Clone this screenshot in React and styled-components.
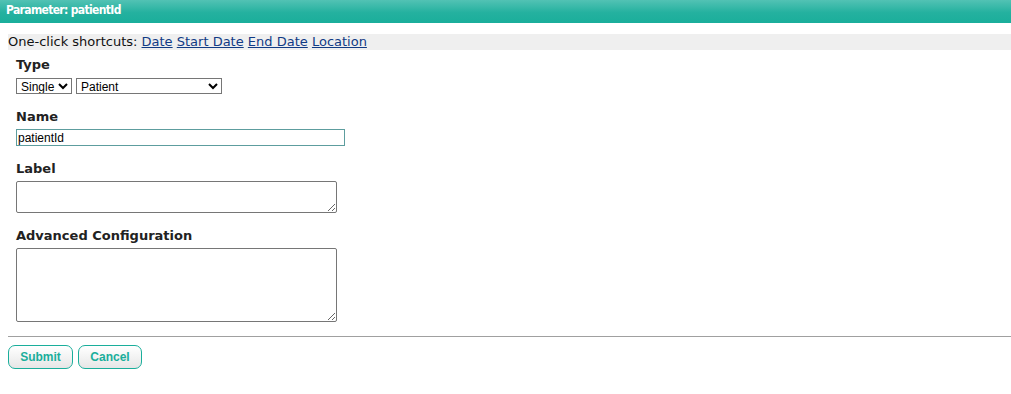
import React from "react";
import styled, { createGlobalStyle } from "styled-components";

const GlobalStyle = createGlobalStyle`
  body {
    margin: 0;
    background: #ffffff;
    font-family: "DejaVu Sans", Verdana, sans-serif;
    color: #222;
  }
`;

export default function App() {
  const shortcuts = ["Date", "Start Date", "End Date", "Location"];

  return (
    <>
      <GlobalStyle />
      <StyledHeader>Parameter: patientId</StyledHeader>
      <StyledPage>
        <StyledShortcutBar>
          One-click shortcuts:{" "}
          {shortcuts.map((s, i) => (
            <React.Fragment key={s}>
              <StyledLink href="#">{s}</StyledLink>
              {i < shortcuts.length - 1 ? " " : ""}
            </React.Fragment>
          ))}
        </StyledShortcutBar>
        <StyledForm>
          <StyledField>
            <StyledLabel>Type</StyledLabel>
            <StyledSelectRow>
              <StyledSelect width={56} defaultValue="Single">
                <option>Single</option>
                <option>Multiple</option>
              </StyledSelect>
              <StyledSelect width={146} defaultValue="Patient">
                <option>Patient</option>
                <option>Location</option>
                <option>Date</option>
              </StyledSelect>
            </StyledSelectRow>
          </StyledField>
          <StyledField>
            <StyledLabel>Name</StyledLabel>
            <StyledInput type="text" defaultValue="patientId" />
          </StyledField>
          <StyledField>
            <StyledLabel>Label</StyledLabel>
            <StyledTextArea rows={2} height={32} />
          </StyledField>
          <StyledField>
            <StyledLabel>Advanced Configuration</StyledLabel>
            <StyledTextArea rows={5} height={74} />
          </StyledField>
        </StyledForm>
        <StyledRule />
        <StyledButtonRow>
          <StyledButton width={65}>Submit</StyledButton>
          <StyledButton width={64}>Cancel</StyledButton>
        </StyledButtonRow>
      </StyledPage>
    </>
  );
}

const StyledHeader = styled.div`
  height: 23px;
  box-sizing: border-box;
  padding: 3px 0 0 6px;
  background: linear-gradient(to bottom, #52c2b4 0%, #24b19f 55%, #1aae9b 100%);
  color: #ffffff;
  font-family: "DejaVu Sans Condensed", "DejaVu Sans", Verdana, sans-serif;
  font-stretch: condensed;
  font-weight: bold;
  font-size: 12px;
  line-height: 14px;
  letter-spacing: -0.65px;
`;

const StyledPage = styled.div`
  padding: 11px 0 0 8px;
`;

const StyledShortcutBar = styled.div`
  background: #efefef;
  height: 16px;
  font-size: 13px;
  line-height: 16px;
  color: #111;
`;

const StyledLink = styled.a`
  color: #113b85;
  text-decoration: underline;
`;

const StyledForm = styled.div`
  display: flex;
  flex-direction: column;
  gap: 13px;
  padding: 5px 0 0 8px;
`;

const StyledField = styled.div`
  display: flex;
  flex-direction: column;
  align-items: flex-start;
  gap: 4px;
`;

const StyledLabel = styled.div`
  font-weight: bold;
  font-size: 13px;
  line-height: 16px;
  padding-top: 2px;
  color: #222;
`;

const StyledSelectRow = styled.div`
  display: flex;
  gap: 4px;
  margin-top: 1px;
`;

const StyledSelect = styled.select`
  width: ${(p) => p.width}px;
  height: 16px;
  box-sizing: border-box;
  padding: 0;
  font-family: "Liberation Sans", Arial, sans-serif;
  font-size: 12px;
  border: 1px solid #767676;
  border-radius: 0;
  background: #fff;
  color: #000;
`;

const StyledInput = styled.input`
  width: 329px;
  height: 17px;
  box-sizing: border-box;
  padding: 0 1px;
  font-family: "Liberation Sans", Arial, sans-serif;
  font-size: 12px;
  border: 1px solid #5d9d9e;
  outline: none;
  color: #000;
`;

const StyledTextArea = styled.textarea`
  width: 321px;
  height: ${(p) => p.height}px;
  box-sizing: border-box;
  border: 1px solid #767676;
  border-radius: 2px;
  font-family: "Liberation Sans", Arial, sans-serif;
  font-size: 12px;
  margin: 0;
`;

const StyledRule = styled.div`
  height: 1px;
  background: #a0a0a0;
  margin-top: 14px;
`;

const StyledButtonRow = styled.div`
  display: flex;
  gap: 5px;
  margin-top: 8px;
`;

const StyledButton = styled.button`
  width: ${(p) => p.width}px;
  height: 24px;
  box-sizing: border-box;
  border: 1px solid #1aae9b;
  border-radius: 7px;
  background: linear-gradient(to bottom, #ffffff 0%, #f3f3f3 50%, #e6e6e6 100%);
  color: #1aae9b;
  font-family: "Liberation Sans", Arial, sans-serif;
  font-weight: bold;
  font-size: 12px;
  padding: 0;
  cursor: pointer;
`;
